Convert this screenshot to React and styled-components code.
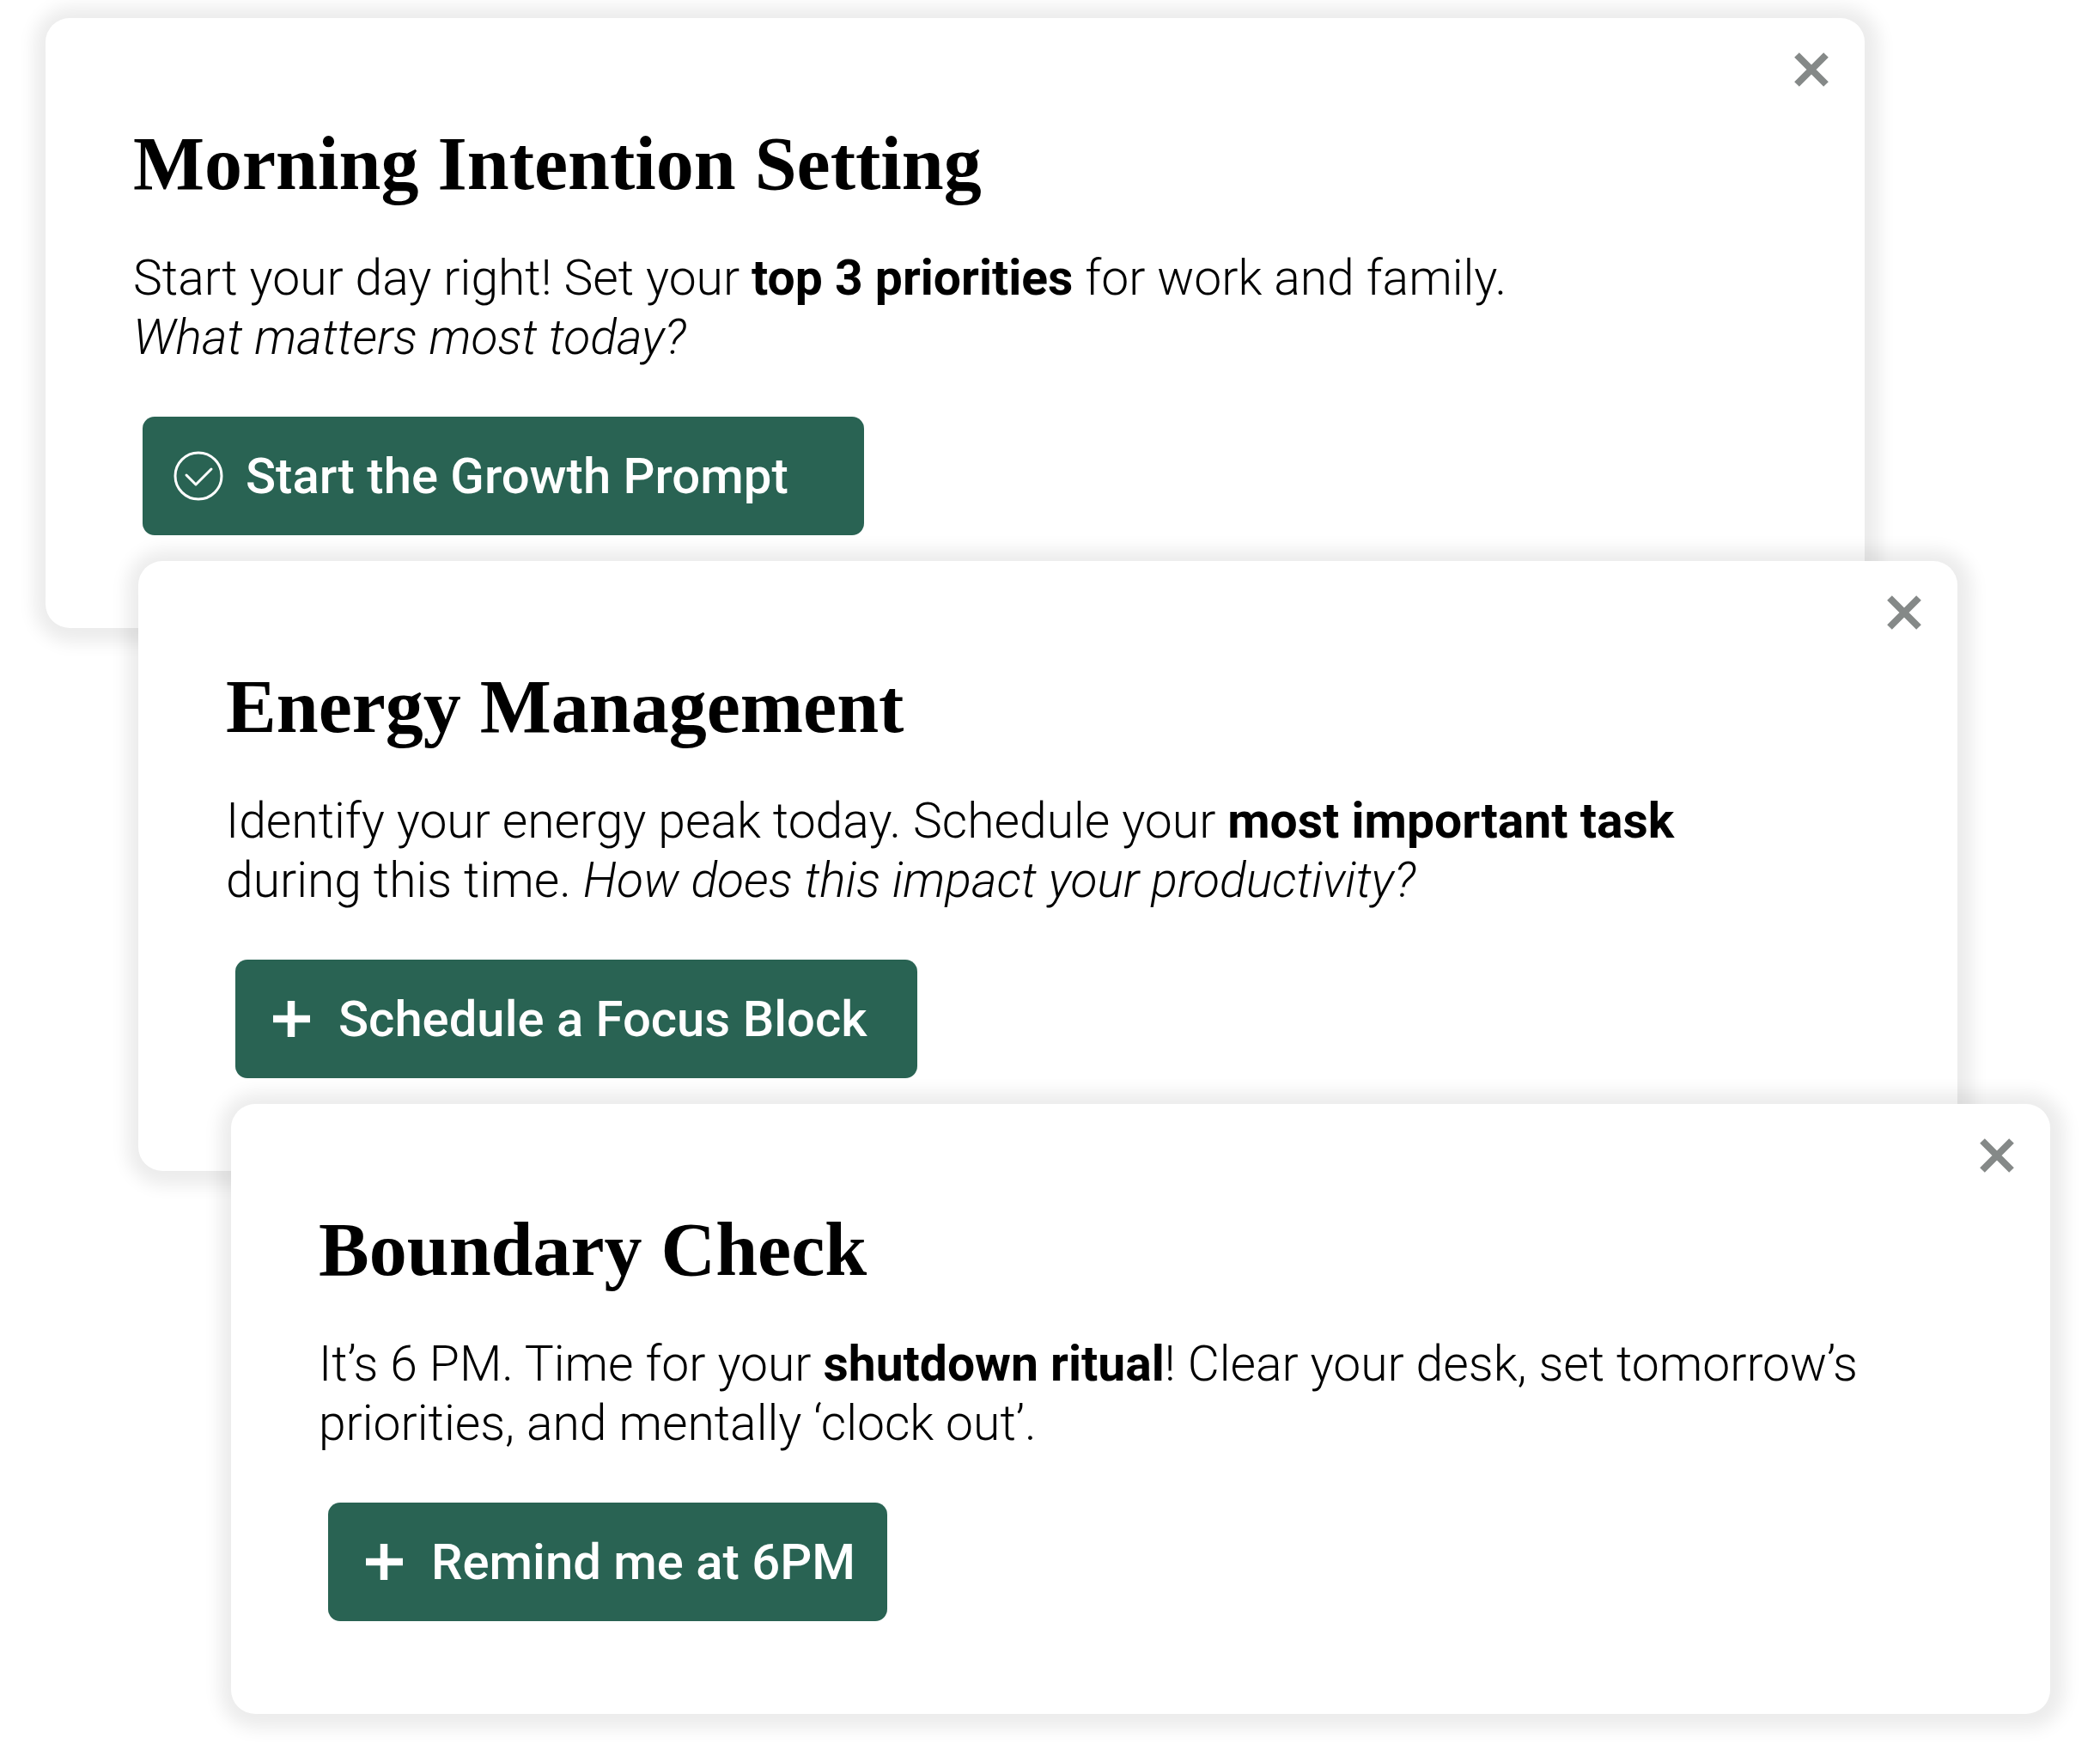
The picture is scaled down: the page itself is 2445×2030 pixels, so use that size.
import React from 'react';
import styled, { createGlobalStyle } from 'styled-components';

const GlobalStyle = createGlobalStyle`
  *,
  *::before,
  *::after {
    box-sizing: border-box;
  }
  body {
    margin: 0;
    background: #fff;
    color: #000;
  }
`;
const Stack = styled.main`
  display: flex;
  flex-direction: column;
  padding: 21px 58px 36px 53px;
`;
const Card = styled.section`
  display: flex;
  flex-direction: column;
  align-items: flex-start;
  width: calc(100% - 216px);
  margin-left: ${props => props.$step * 108}px;
  padding: 30px 32px 108px 102px;
  border-radius: 28px;
  background: #fff;
  box-shadow: 2px 2px 20px 15px rgba(0, 0, 0, 0.08);

  & + & {
    margin-top: -78px;
  }
`;
const Close = styled.button`
  display: flex;
  align-items: center;
  justify-content: center;
  align-self: flex-end;
  width: 60px;
  height: 60px;
  padding: 0;
  border: none;
  background: none;
  color: #858988;
  cursor: pointer;
`;
const Title = styled.h2`
  margin: 32px 0 50px;
  font-family: 'Liberation Serif', serif;
  font-size: 88px;
  font-weight: 700;
  line-height: 96px;
`;
const Text = styled.p`
  margin: 0 0 58px;
  font-family: Roboto, sans-serif;
  font-size: 57px;
  font-weight: 300;
  line-height: 69px;

  strong {
    font-weight: 700;
  }
`;
const Action = styled.button`
  display: flex;
  align-items: center;
  gap: 26px;
  min-width: ${props => props.$width}px;
  height: 138px;
  margin-left: 11px;
  padding: 0 32px 0 36px;
  border: none;
  border-radius: 14px;
  background: #296353;
  color: #fff;
  font-family: Roboto, sans-serif;
  font-size: 58px;
  font-weight: 500;
  white-space: nowrap;
  cursor: pointer;
`;

const CloseIcon = () =>
  (<svg width="40" height="40" viewBox="0 0 40 40" fill="none" aria-hidden="true">
    <path d="M3 3l34 34M37 3L3 37" stroke="currentColor" strokeWidth="8" />
  </svg>);

const CheckIcon = () =>
  (<svg width="58" height="58" viewBox="0 0 58 58" fill="none" aria-hidden="true">
    <circle cx="29" cy="29" r="27" stroke="currentColor" strokeWidth="3" />
    <path
      d="M15 28l11 11 18-18"
      stroke="currentColor"
      strokeWidth="3"
      strokeLinecap="round"
      strokeLinejoin="round"
    />
  </svg>);

const PlusIcon = () =>
  (<svg width="58" height="58" viewBox="0 0 58 58" fill="none" aria-hidden="true">
    <path d="M29 8v42M8 29h43" stroke="currentColor" strokeWidth="8.5" />
  </svg>);

const prompts = [
  {
    title: 'Morning Intention Setting',
    text: (
      <>
        Start your day right! Set your <strong>top 3 priorities</strong> for work and family.
        <br />
        <em>What matters most today?</em>
      </>
    ),
    action: 'Start the Growth Prompt',
    icon: <CheckIcon />,
    width: 840,
  },
  {
    title: 'Energy Management',
    text: (
      <>
        Identify your energy peak today. Schedule your <strong>most important task</strong>
        <br />
        during this time. <em>How does this impact your productivity?</em>
      </>
    ),
    action: 'Schedule a Focus Block',
    icon: <PlusIcon />,
    width: 794,
  },
  {
    title: 'Boundary Check',
    text: (
      <>
        It’s 6 PM. Time for your <strong>shutdown ritual</strong>! Clear your desk, set tomorrow’s
        <br />
        priorities, and mentally ‘clock out’.
      </>
    ),
    action: 'Remind me at 6PM',
    icon: <PlusIcon />,
    width: 651,
  },
];

export default () =>
  (<Stack>
    <GlobalStyle />
    {prompts.map((prompt, index) =>
      (<Card key={prompt.title} $step={index}>
        <Close type="button" aria-label="Close">
          <CloseIcon />
        </Close>
        <Title>{prompt.title}</Title>
        <Text>{prompt.text}</Text>
        <Action type="button" $width={prompt.width}>
          {prompt.icon}
          {prompt.action}
        </Action>
      </Card>),
    )}
  </Stack>);
